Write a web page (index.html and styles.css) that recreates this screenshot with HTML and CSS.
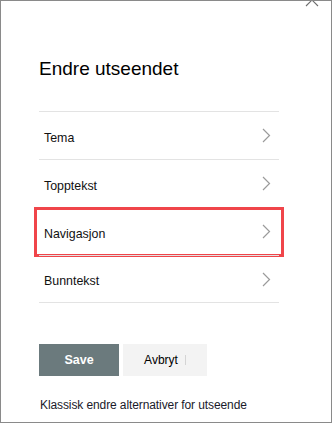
FILE: index.html
```html
<!DOCTYPE html>
<html lang="no">
<head>
<meta charset="utf-8">
<link rel="stylesheet" href="styles.css">
</head>
<body>
<div class="panel">
  <svg class="close" width="14" height="14" viewBox="0 0 14 14" aria-hidden="true"><path d="M1 1 L13 13 M13 1 L1 13" stroke="#6e6e6e" stroke-width="1.1" fill="none"/></svg>
  <h1 class="title">Endre utseendet</h1>
  <ul class="menu">
    <li class="item"><span class="label">Tema</span><svg class="chev" width="9" height="15" viewBox="0 0 9 15"><path d="M1 1 L7.5 7.5 L1 14" stroke="#9b9b9b" stroke-width="1.2" fill="none"/></svg></li>
    <li class="item"><span class="label">Topptekst</span><svg class="chev" width="9" height="15" viewBox="0 0 9 15"><path d="M1 1 L7.5 7.5 L1 14" stroke="#9b9b9b" stroke-width="1.2" fill="none"/></svg></li>
    <li class="item item-marked"><span class="label">Navigasjon</span><svg class="chev" width="9" height="15" viewBox="0 0 9 15"><path d="M1 1 L7.5 7.5 L1 14" stroke="#9b9b9b" stroke-width="1.2" fill="none"/></svg><span class="mark"></span></li>
    <li class="item item-last"><span class="label">Bunntekst</span><svg class="chev" width="9" height="15" viewBox="0 0 9 15"><path d="M1 1 L7.5 7.5 L1 14" stroke="#9b9b9b" stroke-width="1.2" fill="none"/></svg></li>
  </ul>
  <div class="actions">
    <button class="btn btn-save">Save</button>
    <button class="btn btn-cancel"><span>Avbryt</span><span class="caret"></span></button>
  </div>
  <div class="classic">Klassisk endre alternativer for utseende</div>
</div>
</body>
</html>
```

FILE: styles.css
```css
html, body {
  margin: 0;
  padding: 0;
  background: #ffffff;
}

.panel {
  position: relative;
  box-sizing: border-box;
  width: 332px;
  height: 423px;
  border: 1px solid #8a8a8a;
  padding: 56px 0 0 38px;
  font-family: "Liberation Sans", Arial, sans-serif;
  color: #000;
  overflow: hidden;
}

.close {
  position: absolute;
  left: 304px;
  top: -8px;
}

.title {
  margin: 0;
  font-size: 19px;
  font-weight: normal;
  line-height: 24px;
  color: #000;
}

.menu {
  list-style: none;
  margin: 30px 0 0 0;
  padding: 0;
  width: 240px;
}

.item {
  position: relative;
  display: flex;
  align-items: center;
  justify-content: space-between;
  height: 47px;
  border-top: 1px solid #e3e3e3;
  padding: 0 8px 0 5px;
  font-size: 12.4px;
  line-height: 16px;
}

.item-last {
  height: 46px;
  border-bottom: 1px solid #e3e3e3;
}

.label {
  padding-top: 4px;
  color: #111;
}

.chev {
  display: block;
}

.mark {
  position: absolute;
  left: -5px;
  right: -5px;
  top: -1px;
  bottom: -2px;
  border: 3px solid #f0454a;
}

.actions {
  display: flex;
  gap: 4px;
  margin-top: 41px;
}

.btn {
  height: 32px;
  border: none;
  margin: 0;
  padding: 0;
  font-family: "Liberation Sans", Arial, sans-serif;
  display: flex;
  align-items: center;
  justify-content: center;
}

.btn-save {
  width: 80px;
  background: #6b7a7d;
  color: #ffffff;
  font-weight: bold;
  font-size: 12.5px;
}

.btn-cancel {
  width: 84px;
  background: #f3f3f3;
  color: #000;
  font-size: 12px;
  gap: 7px;
}

.caret {
  width: 1px;
  height: 10px;
  background: #d4d4d4;
}

.classic {
  margin-top: 21px;
  padding-left: 1px;
  font-size: 12px;
  line-height: 16px;
  letter-spacing: -0.1px;
  color: #1a1a2a;
}
```
